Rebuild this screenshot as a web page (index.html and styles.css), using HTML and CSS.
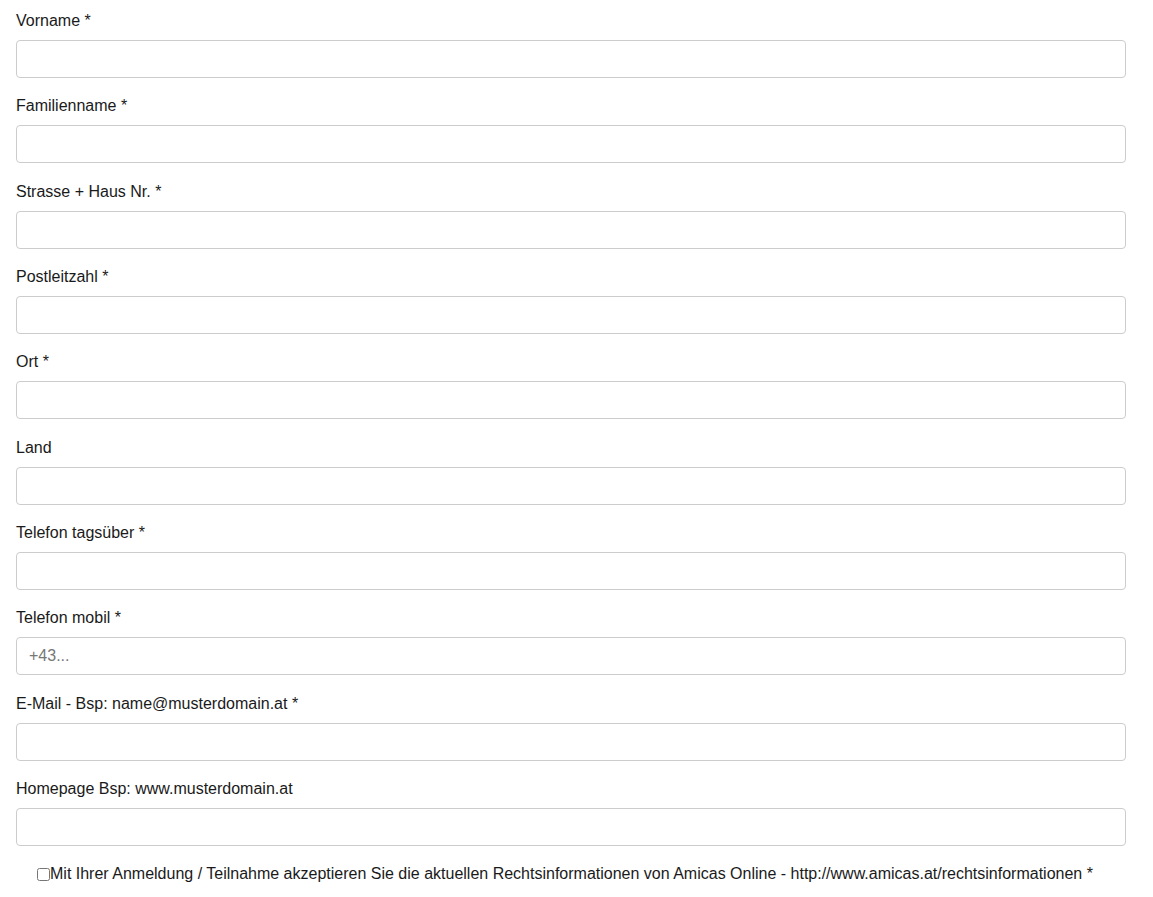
FILE: index.html
```html
<!DOCTYPE html>
<html lang="de">
<head>
  <meta charset="UTF-8">
  <meta name="viewport" content="width=device-width, initial-scale=1.0">
  <title>Anmeldung</title>
  <link rel="stylesheet" href="styles.css">
</head>
<body>

  <form class="signup-form">
    <div class="form-group">
      <label for="vorname">Vorname *</label>
      <input type="text" id="vorname" class="form-control">
    </div>
    <div class="form-group">
      <label for="familienname">Familienname *</label>
      <input type="text" id="familienname" class="form-control">
    </div>
    <div class="form-group">
      <label for="strasse">Strasse + Haus Nr. *</label>
      <input type="text" id="strasse" class="form-control">
    </div>
    <div class="form-group">
      <label for="plz">Postleitzahl *</label>
      <input type="text" id="plz" class="form-control">
    </div>
    <div class="form-group">
      <label for="ort">Ort *</label>
      <input type="text" id="ort" class="form-control">
    </div>
    <div class="form-group">
      <label for="land">Land</label>
      <input type="text" id="land" class="form-control">
    </div>
    <div class="form-group">
      <label for="tel">Telefon tagsüber *</label>
      <input type="text" id="tel" class="form-control">
    </div>
    <div class="form-group">
      <label for="mobil">Telefon mobil *</label>
      <input type="text" id="mobil" class="form-control" placeholder="+43...">
    </div>
    <div class="form-group">
      <label for="email">E-Mail - Bsp: name@musterdomain.at *</label>
      <input type="text" id="email" class="form-control">
    </div>
    <div class="form-group">
      <label for="homepage">Homepage Bsp: www.musterdomain.at</label>
      <input type="text" id="homepage" class="form-control">
    </div>

    <!-- Zustimmung -->
    <div class="checkbox-row">
      <input type="checkbox" id="agb" class="check">
      <label for="agb">Mit Ihrer Anmeldung / Teilnahme akzeptieren Sie die aktuellen Rechtsinformationen von Amicas Online - http://www.amicas.at/rechtsinformationen *</label>
    </div>
  </form>

</body>
</html>
```

FILE: styles.css
```css
body {
  font-family: "Liberation Sans", Arial, sans-serif;
  font-size: 16px;
  color: #1a1a1a;
  background-color: #fff;
  margin: 0;
  padding: 0;
}
.signup-form {
  width: 1110px;
  padding: 9px 16px 8px;
}
.form-group {
  margin-bottom: 16.33px;
}
.form-group label {
  display: block;
  line-height: 24px;
  margin-bottom: 7px;
}
.form-control {
  display: block;
  box-sizing: border-box;
  width: 100%;
  height: 38px;
  padding: 6px 12px;
  font-family: inherit;
  font-size: 16px;
  color: #1a1a1a;
  background-color: #fff;
  border: 1px solid #ccc;
  border-radius: 4px;
  outline: none;
}
.form-control::placeholder {
  color: #777;
}
.checkbox-row {
  display: flex;
  align-items: center;
  padding-left: 21px;
  line-height: 24px;
}
.check {
  width: 13px;
  height: 13px;
  margin: 0;
}
```
